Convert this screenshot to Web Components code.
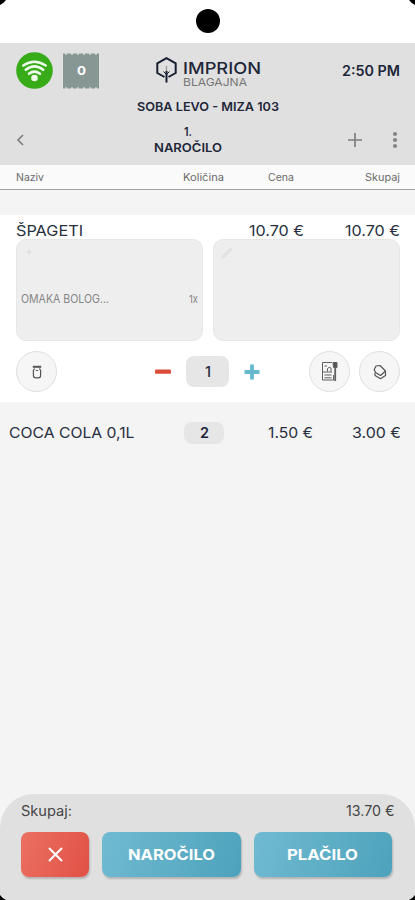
<!DOCTYPE html>
<html lang="sl"><head><meta charset="utf-8"><title>Imprion blagajna</title>
<style>html,body{margin:0}body{font-family:Inter,"Noto Sans",sans-serif;color:#272f40;background:#f4f4f4}</style></head>
<body><pos-screen></pos-screen>
<script>
const define=(name,html,after)=>customElements.define(name,class extends HTMLElement{
  connectedCallback(){
    if(this.shadowRoot)return;
    const t=document.createElement('template');t.innerHTML=html;
    this.attachShadow({mode:'open'}).append(t.content.cloneNode(true));
    if(after)after.call(this,this.shadowRoot);
  }
});

// One line of wide lettering, stretched to the width given in "w".
define('wide-text',`<style>:host{display:block;flex:none;white-space:nowrap;line-height:1;height:1em}span{display:inline-block;transform-origin:0 50%;line-height:1;vertical-align:top}</style><span><slot></slot></span>`,function(r){
  const w=+this.getAttribute('w'),s=r.querySelector('span');
  this.style.fontSize=this.getAttribute('size')+'px';
  this.style.fontWeight=this.getAttribute('weight')||400;
  this.style.width='max-content';
  const n=s.getBoundingClientRect().width;
  this.style.width=w+'px';
  s.style.transform='scaleX('+w/n+')';
});

define('status-bar',`<style>:host{display:flex;height:43px;background:#fff;justify-content:center}i{width:24px;height:24px;border-radius:50%;background:#000;margin-top:9px}</style><i></i>`);

define('wifi-badge',`<style>:host{display:block;width:37px;height:37px}svg{display:block}</style>
<svg width="37" height="37" viewBox="0 0 37 37"><circle cx="18.5" cy="18.5" r="18.3" fill="#37ab18"/><g fill="none" stroke="#eefbea" stroke-width="2.6" stroke-linecap="round"><path d="M7.300 13.500Q18.300 6 29.700 13.500"/><path d="M9.800 17.800Q18.300 11 27.200 17.800"/><path d="M13 21.800Q18.300 17.600 24 21.800"/></g><circle cx="18.5" cy="26" r="3.300" fill="#eefbea"/></svg>`);

define('ticket-badge',`<style>:host{display:grid;width:36px;height:36px;color:#fff}svg,div{grid-area:1/1}div{place-self:center}</style>
<svg width="36" height="36" viewBox="0 0 36 36"><path fill="#879794" d="M0 .5h2q1 3.600 2 0h4q1 3.600 2 0h4q1 3.600 2 0h4q1 3.600 2 0h4q1 3.600 2 0h4q1 3.600 2 0h4V35.500h-4q-1-3.600-2 0h-4q-1-3.600-2 0h-4q-1-3.600-2 0h-4q-1-3.600-2 0h-4q-1-3.600-2 0h-4q-1-3.600-2 0h-2z"/></svg><div><wide-text w="9" size="12" weight="700"><slot></slot></wide-text></div>`);

define('brand-logo',`<style>:host{display:flex;gap:5.500px;align-items:flex-start}div{padding-top:3px}wide-text+wide-text{color:#777;margin:1px 0 0 .5px}</style>
<svg width="21" height="26" viewBox="0 0 21 26" fill="none" stroke="#171e30" stroke-width="2"><path d="M8.500 20 1.300 16V6.300L10.500 1.200 19.700 6.300V16L12.500 20"/><path d="M10.500 14V25.500"/><path d="M10.500 9V14" stroke="#999" stroke-width="1.300"/><path d="M7.500 14.500 10.500 17.500 13.500 14.500" stroke-width="1"/></svg>
<div><wide-text w="78" size="16" weight="500">IMPRION</wide-text><wide-text w="64" size="11">BLAGAJNA</wide-text></div>`);

define('app-header',`<style>
:host{display:block;height:122px;background:#e0e0e0;color:#1e2639}
.top{display:grid;grid-template-columns:1fr auto 1fr;height:55px;padding:0 15px 0 16px;align-items:center}
.l{display:flex;gap:10px;align-items:center}.r{justify-self:end}
.title{display:flex;justify-content:center;padding-top:3px;height:16px}
.nav{display:grid;grid-template-columns:1fr auto 1fr;align-items:center;padding:1px 15px 0 16px;height:44px}
.mid{display:flex;flex-direction:column;align-items:center;gap:3.500px;margin-left:-40px}
.act{display:flex;justify-content:flex-end;gap:28px;align-items:center}svg{display:block}
brand-logo{margin:3px 0 0 1px}
</style>
<div class="top"><div class="l"><wifi-badge></wifi-badge><ticket-badge>0</ticket-badge></div><brand-logo></brand-logo><wide-text class="r" w="58" size="14" weight="600">2:50 PM</wide-text></div>
<div class="title"><wide-text w="142" size="12.300" weight="600">SOBA LEVO - MIZA 103</wide-text></div>
<div class="nav"><svg width="9" height="12" viewBox="0 0 9 12" fill="none" stroke="#7e7e7e" stroke-width="1.700"><path d="M7 1 2 6 7 11"/></svg>
<div class="mid"><wide-text w="8" size="12" weight="600">1.</wide-text><wide-text w="68" size="12" weight="600">NAROČILO</wide-text></div>
<div class="act"><svg width="14" height="14" viewBox="0 0 14 14" stroke="#7e7e7e" stroke-width="1.700"><path d="M7 0V14M0 7H14"/></svg><svg width="10" height="18" viewBox="0 0 10 18" fill="#858585"><circle cx="5" cy="3" r="2.100"/><circle cx="5" cy="9" r="2.100"/><circle cx="5" cy="15" r="2.100"/></svg></div></div>`);

define('column-heads',`<style>:host{display:grid;grid-template-columns:167px 85px 97px 1fr;height:24px;padding:0 15px 0 16px;background:#fafafa;border-bottom:1.500px solid #a2a2a2;align-items:center;color:#6b6b6b}wide-text:last-child{justify-self:end}</style>
<wide-text w="28" size="10">Naziv</wide-text><wide-text w="41" size="10">Količina</wide-text><wide-text w="26" size="10">Cena</wide-text><wide-text w="35" size="10">Skupaj</wide-text>`);

define('option-panel',`<style>:host{display:flex;flex-direction:column;height:102px;box-sizing:border-box;background:#eee;border:1px solid #e7e7e7;border-radius:10px;padding:7px 4px;color:#858585}.i{height:14px;padding-left:3px;margin-bottom:32.500px}.b{display:flex;justify-content:space-between;height:12px;align-items:center}</style><div class="i"><slot name="icon"></slot></div><div class="b"><slot></slot></div>`);

define('round-button',`<style>:host{display:grid;place-items:center;box-sizing:border-box;width:41px;height:41px;border-radius:50%;border:1.500px solid #dfdfdf;background:#f6f6f6}</style><slot></slot>`);

define('qty-box',`<style>:host{display:grid;place-items:center;background:#e6e6e6;border-radius:8px}</style><slot></slot>`);

define('open-item',`<style>
:host{display:flex;flex-direction:column;box-sizing:border-box;height:187px;background:#fff;padding:8.500px 15px 0 16px}
.row{display:flex;height:15px;align-items:center}.row :nth-child(2){margin-left:auto}.row :nth-child(3){margin-left:41px}
.panels{display:grid;grid-template-columns:1fr 1fr;gap:10px;margin:1px 0 10px}
.ctl{display:flex;align-items:center;height:41px}
.step{display:flex;align-items:center;gap:15px;margin-left:98px}.right{display:flex;gap:9px;margin-left:auto}
qty-box{width:43px;height:31px}svg{display:block}
</style>
<div class="row"><wide-text w="67" size="15">ŠPAGETI</wide-text><wide-text w="55" size="15">10.70 €</wide-text><wide-text w="55" size="15">10.70 €</wide-text></div>
<div class="panels"><option-panel><svg slot="icon" width="10" height="10" viewBox="0 0 10 10" stroke="#dcdcdc" stroke-width="1.200"><path d="M5 2V8M2 5H8"/></svg><wide-text w="88" size="11.300">OMAKA BOLOG...</wide-text><wide-text w="9" size="11">1x</wide-text></option-panel>
<option-panel><svg slot="icon" width="12" height="12" viewBox="0 0 12 12" fill="#e2e2e2" stroke="#dedede" stroke-width=".8"><path d="M1 11 2 8 9 1 11 3 4 10z"/></svg></option-panel></div>
<div class="ctl"><round-button><svg width="10" height="14" viewBox="0 0 10 14" fill="none" stroke="#555" stroke-width="1.200"><path d="M.8 1.800H9.200" stroke-width="2"/><path d="M2.600 3.500 1.400 5.500V10.500Q1.400 12.800 3.600 12.800H6.400Q8.600 12.800 8.600 10.500V5.500L7.400 3.500M3.800 5.500H6.200"/></svg></round-button>
<div class="step"><svg width="16" height="6" viewBox="0 0 16 6"><rect y=".5" width="16" height="4.200" rx="1" fill="#db4c38"/></svg><qty-box><wide-text w="6" size="14" weight="500">1</wide-text></qty-box><svg width="16" height="16" viewBox="0 0 16 16" stroke="#65b8ce" stroke-width="3.800"><path d="M8 .5V15.500M.5 8H15.500"/></svg></div>
<div class="right"><round-button><svg width="17" height="21" viewBox="0 0 17 21" fill="none" stroke="#606060" stroke-width="1"><path d="M11 1.500H1.500V19H12.500V14"/><path d="M14.200 7V20" stroke-width="1.800"/><path d="M3.500 14H10.500M3.500 16.800H10.500M1.500 11H11"/><path d="M3.500 5H6M6.500 10.500V7.500Q8 5.500 10 7V10.500"/><path d="M12 1.500H16V6.500H12.500z" fill="#555"/></svg></round-button>
<round-button><svg width="14" height="16" viewBox="0 0 14 16" fill="none" stroke="#555" stroke-width="1.200" stroke-linejoin="round"><path d="M1.200 5.500 3 2 7 1.500 12.500 7 7.500 11.500 2.500 8.500z"/><path d="M2 9V11.500L7.500 14.700 12.500 11.500V7.500"/></svg></round-button></div></div>`);

define('order-line',`<style>:host{display:grid;grid-template-columns:175px 84px 84px 1fr;box-sizing:border-box;height:62.500px;padding:0 15px 0 9px;align-items:center}qty-box{width:40px;height:22px;color:#18223a}.sum{justify-self:end}</style>
<wide-text w="125.500" size="15">COCA COLA 0,1L</wide-text><qty-box><wide-text w="9" size="14" weight="600">2</wide-text></qty-box><wide-text w="45" size="15">1.50 €</wide-text><wide-text class="sum" w="49" size="15">3.00 €</wide-text>`);

define('action-button',`<style>:host{display:grid;place-items:center;height:45px;border-radius:8px;color:#fff;background:linear-gradient(110deg,#70bbd2,#4da2bb);box-shadow:1px 2px 2px #0003}:host([danger]){background:linear-gradient(110deg,#eb7062,#e15145)}</style><slot></slot>`);

define('total-bar',`<style>:host{display:block;box-sizing:border-box;height:106.500px;background:#e0e0e0;border-radius:34px 34px 0 0;padding:10px 21px 0}.sum{display:flex;justify-content:space-between;height:15px;align-items:center;color:#454545}.btn{display:grid;grid-template-columns:68px 1fr 1fr;gap:13px;margin:13.500px 2px 0 0}</style>
<div class="sum"><wide-text w="51" size="14">Skupaj:</wide-text><wide-text w="48.500" size="14">13.70 €</wide-text></div>
<div class="btn"><action-button danger><svg width="15" height="15" viewBox="0 0 15 15" stroke="#fff" stroke-width="2"><path d="M1 1 14 14M14 1 1 14"/></svg></action-button><action-button><wide-text w="87" size="15" weight="700">NAROČILO</wide-text></action-button><action-button><wide-text w="71" size="15" weight="700">PLAČILO</wide-text></action-button></div>`);

define('pos-screen',`<style>:host{display:flex;flex-direction:column;width:415px;height:900px;overflow:hidden;position:relative;background:#f4f4f4}open-item{margin-top:24.500px}total-bar{margin-top:auto}
.c{position:absolute;inset:0;pointer-events:none}</style>
<status-bar></status-bar><app-header></app-header><column-heads></column-heads><open-item></open-item><order-line></order-line><total-bar></total-bar>
<svg class="c" width="415" height="900" viewBox="0 0 415 900"><path d="M0 0H6Q4 3 0 5zM415 0H409Q411 3 415 5zM0 895Q2 898 6 900H0zM415 895Q413 898 409 900H415z"/></svg>`);
</script></body></html>
